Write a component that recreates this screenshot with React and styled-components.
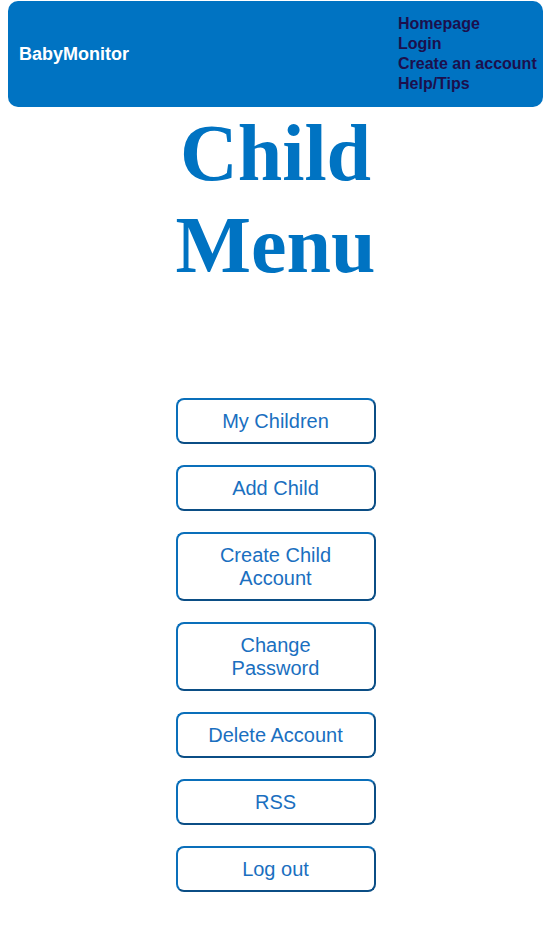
import styled, { createGlobalStyle } from 'styled-components';

const GlobalStyle = createGlobalStyle`
  body {
    margin: 0;
    background: #ffffff;
    font-family: "Liberation Sans", Arial, sans-serif;
  }
`;

const Page = styled.div`
  display: flex;
  flex-direction: column;
  align-items: center;
  padding: 0 2px 40px 8px;
`;

const Header = styled.header`
  align-self: stretch;
  display: flex;
  align-items: center;
  justify-content: space-between;
  height: 106px;
  margin-top: 1px;
  padding: 0 6px 0 11px;
  background: #0073c2;
  border-radius: 10px;
`;

const Brand = styled.div`
  color: #ffffff;
  font-weight: bold;
  font-size: 18px;
`;

const Nav = styled.nav`
  display: flex;
  flex-direction: column;
  width: 139px;
`;

const NavLink = styled.a`
  color: #1c0f4d;
  font-weight: bold;
  font-size: 16px;
  line-height: 20px;
  text-decoration: none;
  white-space: nowrap;
`;

const Title = styled.h1`
  width: 200px;
  margin: 0;
  text-align: center;
  font-family: "Liberation Serif", "Times New Roman", serif;
  font-size: 80px;
  line-height: 92px;
  font-weight: bold;
  color: #0073c2;
`;

const Menu = styled.div`
  display: flex;
  flex-direction: column;
  gap: 21px;
  margin-top: 107px;
`;

const MenuButton = styled.button`
  width: 200px;
  padding: 9.5px 20px;
  background: #ffffff;
  border: 2px solid #0a6fba;
  border-right-color: #0b4e85;
  border-bottom-color: #0b4e85;
  border-radius: 8px;
  font-family: "Liberation Sans", Arial, sans-serif;
  font-size: 20px;
  line-height: 23px;
  color: #1a6fc0;
  text-align: center;
  cursor: pointer;
`;

const items = [
  'My Children',
  'Add Child',
  'Create Child Account',
  'Change Password',
  'Delete Account',
  'RSS',
  'Log out',
];

export default function App() {
  return (
    <Page>
      <GlobalStyle />
      <Header>
        <Brand>BabyMonitor</Brand>
        <Nav>
          <NavLink href="#">Homepage</NavLink>
          <NavLink href="#">Login</NavLink>
          <NavLink href="#">Create an account</NavLink>
          <NavLink href="#">Help/Tips</NavLink>
        </Nav>
      </Header>
      <Title>Child Menu</Title>
      <Menu>
        {items.map(item => (
          <MenuButton key={item}>{item}</MenuButton>
        ))}
      </Menu>
    </Page>
  );
}
